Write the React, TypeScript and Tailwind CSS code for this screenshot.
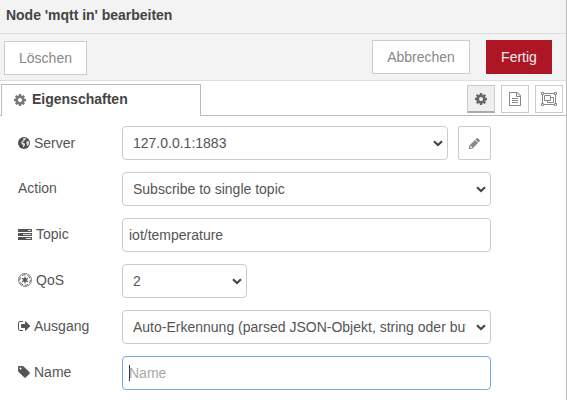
import type { ReactNode } from "react";

const COG =
  "M1152 896q0-106-75-181t-181-75-181 75-75 181 75 181 181 75 181-75 75-181zm512-109v222q0 12-8 23t-20 13l-185 28q-19 54-39 91 35 50 107 138 10 12 10 25t-9 23q-27 37-99 108t-94 71q-12 0-26-9l-138-108q-44 23-91 38-16 136-29 186-7 28-36 28h-222q-14 0-24.5-8.5t-11.5-21.5l-28-184q-49-16-90-37l-141 107q-10 9-25 9-14 0-25-11-126-114-165-168-7-10-7-23 0-12 8-23 15-21 51-66.5t54-70.5q-27-50-41-99l-183-27q-13-2-21-12.5t-8-23.5v-222q0-12 8-23t19-13l186-28q14-46 39-92-40-57-107-138-10-12-10-24 0-10 9-23 26-36 98.5-107.5t94.5-71.5q13 0 26 10l138 107q44-23 91-38 16-136 29-186 7-28 36-28h222q14 0 24.5 8.5t11.5 21.5l28 184q49 16 90 37l142-107q9-9 24-9 13 0 25 10 129 119 165 170 7 8 7 22 0 12-8 23-15 21-51 66.5t-54 70.5q26 50 41 98l183 28q13 2 21 12.5t8 23.5z";
const TAG =
  "M576 448q0-53-37.5-90.5t-90.5-37.5-90.5 37.5-37.5 90.5 37.5 90.5 90.5 37.5 90.5-37.5 37.5-90.5zm1067 576q0 53-37 90l-491 492q-39 37-91 37-53 0-90-37l-715-716q-38-37-64.5-101t-26.5-117v-416q0-52 38-90t90-38h416q53 0 117 26.5t102 64.5l715 714q37 39 37 91z";
const FILE =
  "M1596 380q28 28 48 76t20 88v1152q0 40-28 68t-68 28h-1344q-40 0-68-28t-28-68v-1600q0-40 28-68t68-28h896q40 0 88 20t76 48zm-444-244v376h376q-10-29-22-41l-313-313q-12-12-41-22zm384 1528v-1024h-416q-40 0-68-28t-28-68v-416h-768v1536h1280zm-1024-864q0-14 9-23t23-9h704q14 0 23 9t9 23v64q0 14-9 23t-23 9h-704q-14 0-23-9t-9-23v-64zm736 224q14 0 23 9t9 23v64q0 14-9 23t-23 9h-704q-14 0-23-9t-9-23v-64q0-14 9-23t23-9h704zm0 256q14 0 23 9t9 23v64q0 14-9 23t-23 9h-704q-14 0-23-9t-9-23v-64q0-14 9-23t23-9h704z";
const SIGN_OUT =
  "M704 1440q0 4 1 20t.5 26.5-3 23.5-10 19.5-20.5 6.5h-320q-119 0-203.5-84.5t-84.5-203.5v-704q0-119 84.5-203.5t203.5-84.5h320q13 0 22.5 9.5t9.5 22.5q0 4 1 20t.5 26.5-3 23.5-10 19.5-20.5 6.5h-320q-66 0-113 47t-47 113v704q0 66 47 113t113 47h312l11.5 1 11.5 3 8 5.5 7 9 2 13.5zm928-544q0 26-19 45l-544 544q-19 19-45 19t-45-19-19-45v-288h-448q-26 0-45-19t-19-45v-384q0-26 19-45t45-19h448v-288q0-26 19-45t45-19 45 19l544 544q19 19 19 45z";
const PENCIL =
  "M491 1536l91-91-235-235-91 91v107h128v128h107zm469-1120l416 416-832 832h-416v-416zm683 96q0 53-37 90l-166 166-416-416 166-165q36-38 90-38 53 0 91 38l235 234q37 39 37 91z";

function Glyph({ d, box = "0 0 1792 1792", className }: { d: string; box?: string; className: string }) {
  return (
    <svg viewBox={box} className={`shrink-0 fill-current ${className}`}>
      <path d={d} />
    </svg>
  );
}

function Globe() {
  return (
    <svg viewBox="0 0 12 12" className="h-3 w-3 shrink-0">
      <circle cx="6" cy="6" r="6" fill="#505050" />
      <path d="M5 1.2 7.6 1.1 8 2.2 6.8 3 5.8 4.4 4.5 4.9 4.8 5.6 6.4 6.2 7.2 7.4 6.4 9 5.4 10.6 4.9 9.4 5.1 7.9 3.8 7.1 3.2 5.8 3.8 4.2 5.4 2.9zM9 4.2 10.6 4 11.2 6 10.6 8 9.2 9.4 9 7.4 8.2 6z" fill="#f4f4f4" fillOpacity=".85" />
    </svg>
  );
}

function Tasks() {
  return (
    <svg viewBox="0 0 14 11" className="h-[11px] w-3.5 shrink-0">
      <path d="M0 0h14v3H0zM0 4h14v3H0zM0 8h14v3H0z" fill="#555" />
      <path d="M10 1h3v1h-3zM5 5h8v1H5zM8 9h5v1H8z" fill="#ddd" />
    </svg>
  );
}

function Empire() {
  return (
    <svg viewBox="0 0 14 14" className="h-3.5 w-3.5 shrink-0" fill="none" stroke="#555">
      <circle cx="7" cy="7" r="6.5" strokeWidth="0.7" />
      <circle cx="7" cy="7" r="5.3" strokeWidth="0.9" strokeDasharray="3.9 1.65" strokeDashoffset="1" />
      <path d="M7 3.6v6.8M4 5.3l6 3.4M4 8.7l6-3.4" strokeWidth="1.1" />
      <circle cx="7" cy="7" r="1.9" fill="#555" stroke="none" />
    </svg>
  );
}

function ObjectGroup() {
  return (
    <svg viewBox="0 0 16 14" className="h-3.5 w-4 shrink-0" fill="none" stroke="#888">
      <path d="M3 1.5h10M3 12.5h10M1.5 3v8M14.5 3v8" />
      <path d="M.5.5h2v2h-2zM13.5.5h2v2h-2zM.5 11.5h2v2h-2zM13.5 11.5h2v2h-2z" />
      <path d="M3.5 3.5h6v5h-6zM9.5 5.5h3v5h-6v-2" />
    </svg>
  );
}

function Select({ value, className }: { value: string; className: string }) {
  return (
    <div className={`relative h-[34px] shrink-0 ${className}`}>
      <select className="h-full w-full appearance-none rounded-[4px] border border-[#ccc] bg-white pr-[24px] pl-[10px] text-[14px] text-[#555] outline-none">
        <option>{value}</option>
      </select>
      <svg viewBox="0 0 10 7" className="pointer-events-none absolute top-[14px] right-[5px] h-[7px] w-[10px]" fill="none">
        <path d="M1 1.2 5 5 9 1.2" stroke="#444" strokeWidth="2.1" />
      </svg>
    </div>
  );
}

function Row({ icon, label, labelHeight = "h-8", children }: { icon?: ReactNode; label: string; labelHeight?: string; children: ReactNode }) {
  return (
    <div className="flex h-[34px]">
      <label className={`flex w-[104px] shrink-0 items-center gap-1 text-[14px] leading-5 ${labelHeight}`}>
        {icon}
        <span>{label}</span>
      </label>
      {children}
    </div>
  );
}

export default function App() {
  return (
    <div className="flex h-[400px] w-[567px] flex-col overflow-hidden border-r border-[#bbb] bg-white font-['Liberation_Sans',Arial,sans-serif] text-[14px] text-[#555]">
      <header className="flex h-[34px] shrink-0 items-center border-b border-[#ddd] bg-[#f3f3f3] pb-[3px] pl-[6px] font-bold tracking-[-0.02px] text-[#444]">
        Node 'mqtt in' bearbeiten
      </header>
      <div className="flex h-[47px] shrink-0 border-b border-[#ddd] bg-[#f3f3f3] pt-[6px] pr-[14px] pl-1 text-[#888]">
        <button className="mt-px h-[34px] w-[83px] border border-[#ccc] bg-white">Löschen</button>
        <button className="ml-auto h-[34px] w-[98px] border border-[#ccc] bg-white">Abbrechen</button>
        <button className="ml-4 h-[34px] w-[66px] bg-[#ad1625] text-[#eee]">Fertig</button>
      </div>
      <div className="flex h-[35px] shrink-0 pt-[3px]">
        <div className="w-px border-b border-[#bbb]" />
        <div className="flex w-[200px] items-center gap-[6px] border-x border-t border-[#bbb] pb-[2px] pl-3 font-bold text-[#444]">
          <Glyph d={COG} box="128 0 1536 1792" className="h-[14px] w-3 text-[#777]" />
          <span>Eigenschaften</span>
        </div>
        <div className="flex flex-1 justify-end gap-[6px] border-b border-[#bbb] pt-px pr-[3px] text-[#888]">
          <button className="flex h-7 w-7 items-center justify-center border border-b-2 border-[#ccc] border-b-[#aaa] bg-[#efefef] pt-px text-[#666]">
            <Glyph d={COG} className="h-[14px] w-[14px]" />
          </button>
          <button className="flex h-7 w-7 items-center justify-center border border-[#ccc]">
            <Glyph d={FILE} className="h-[14px] w-[14px]" />
          </button>
          <button className="flex h-7 w-7 items-center justify-center border border-[#ccc]">
            <ObjectGroup />
          </button>
        </div>
      </div>
      <form className="flex flex-col gap-3 pt-[10px] pl-[18px]">
        <Row icon={<Globe />} label="Server" labelHeight="h-[34px]">
          <Select value="127.0.0.1:1883" className="w-[326px]" />
          <button type="button" className="ml-[10px] flex h-[34px] w-[33px] items-center justify-center rounded-[2px] border border-[#ccc] text-[#888]">
            <Glyph d={PENCIL} className="h-[13px] w-[13px]" />
          </button>
        </Row>
        <Row label="Action">
          <Select value="Subscribe to single topic" className="w-[369px]" />
        </Row>
        <Row icon={<Tasks />} label="Topic">
          <input defaultValue="iot/temperature" className="h-[34px] w-[369px] rounded-[4px] border border-[#ccc] px-[6px] outline-none" />
        </Row>
        <Row icon={<Empire />} label="QoS">
          <Select value="2" className="w-[125px]" />
        </Row>
        <Row icon={<Glyph d={SIGN_OUT} box="64 0 1536 1792" className="h-[14px] w-3 overflow-visible" />} label="Ausgang">
          <Select value="Auto-Erkennung (parsed JSON-Objekt, string oder buffer)" className="w-[369px]" />
        </Row>
        <Row icon={<Glyph d={TAG} box="128 0 1536 1792" className="h-[14px] w-3" />} label="Name">
          <div className="flex h-[34px] w-[369px] items-center rounded-[4px] border border-[#70a7eb] pl-[6px]">
            <span className="h-4 w-px bg-[#333]" />
            <input placeholder="Name" className="-ml-px min-w-0 flex-1 outline-none placeholder:text-[#aaa]" />
          </div>
        </Row>
      </form>
    </div>
  );
}
